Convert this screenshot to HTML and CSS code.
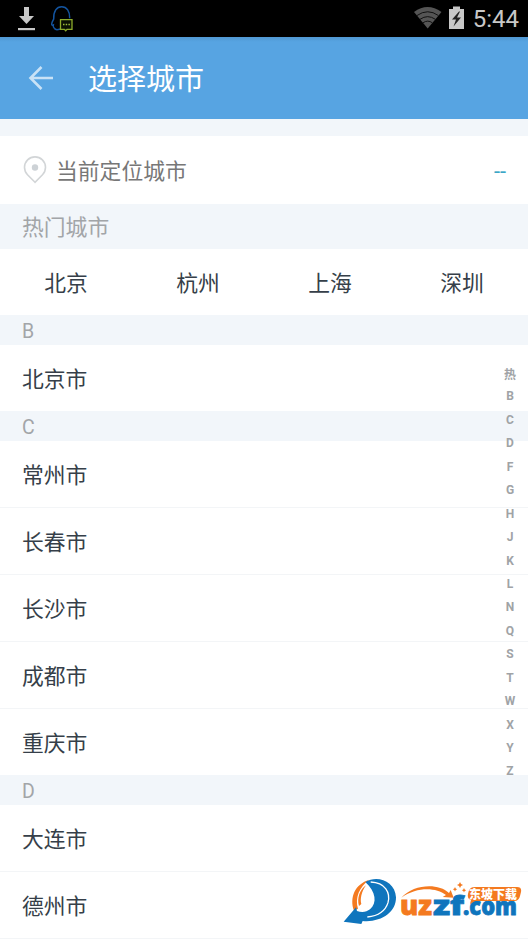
FILE: index.html
```html
<!DOCTYPE html>
<html lang="zh-CN">
<head>
<meta charset="utf-8">
<title>选择城市</title>
<link rel="stylesheet" href="styles.css">
</head>
<body>
<div class="screen">
  <div class="status">
    <svg class="status-left" width="80" height="37" viewBox="0 0 80 37">
      <path d="M24 7h5v9h5l-7.500 8-7.500-8h5z" fill="#c8c8c8"/>
      <path d="M18 28h17v2.200H18z" fill="#c8c8c8"/>
      <path d="M54.500 28.500c-1.200-1-1.500-2-1.200-3.500-1 .5-1.600 0-1.600-1 0-2 1.500-3.500 2-5-.3-8 3-12.300 8-12.300s8.300 4.500 8 11.500M54.500 28.500c1 1.500 3.500 1.200 5.500.5" fill="none" stroke="#13549f" stroke-width="1.500"/>
      <path d="M60.500 19.700h11.500v9.600h-5l-1.300 1.500-1.300-1.500h-3.900z" fill="#0b1003" stroke="#8dab2b" stroke-width="1.300"/>
      <path d="M63 23.800h1.500v1.500H63zm2.700 0h1.500v1.500h-1.500zm2.700 0h1.500v1.500h-1.500z" fill="#9dbb39"/>
    </svg>
    <div class="status-right">
      <svg width="52" height="37" viewBox="0 0 52 37">
        <path d="M0 12Q13.500 1.800 27.500 12L13.700 28.500z" fill="#555"/>
        <path d="M3 15.500q10.700-7.500 21.400 0M6 19.300q7.700-5.300 15.400 0M9 22.800q4.700-3.300 9.400 0" fill="none" stroke="#111" stroke-width="1"/>
        <path d="M35 9h4V6.500h7V9h4v20H35z" fill="#c8c8c8"/>
        <path d="M45 11.500L38 19.500h4l-2.500 7 7.500-9h-4l3-6z" fill="#222"/>
      </svg>
      <span class="clock">5:44</span>
    </div>
  </div>
  <header class="bar">
    <svg class="back" width="26" height="26" viewBox="0 0 26 26"><path d="M25 13H2.500M13.500 2L2.500 13l11 11" fill="none" stroke="#c9e2f6" stroke-width="2.600"/></svg>
    <h1>选择城市</h1>
  </header>
  <div class="location">
    <svg class="pin" width="24" height="28" viewBox="0 0 24 28"><path d="M12 26.300L4.500 18.700A10.500 10.500 0 1 1 19.500 18.700z" fill="none" stroke="#d2d5d7" stroke-width="1.600"/><circle cx="12" cy="11.500" r="3.200" fill="#cdd2d6"/></svg>
    <span class="here">当前定位城市</span>
    <span class="located">--</span>
  </div>
  <div class="hot-title">热门城市</div>
  <div class="hot"><span>北京</span><span>杭州</span><span>上海</span><span>深圳</span></div>
  <div class="letter">B</div>
  <ul><li>北京市</li></ul>
  <div class="letter">C</div>
  <ul><li>常州市</li><li>长春市</li><li>长沙市</li><li>成都市</li><li>重庆市</li></ul>
  <div class="letter">D</div>
  <ul class="clipped"><li>大连市</li><li>德州市</li></ul>
  <nav class="index">
    <span class="first">热</span><span>B</span><span>C</span><span>D</span><span>F</span><span>G</span><span>H</span><span>J</span><span>K</span><span>L</span><span>N</span><span>Q</span><span>S</span><span>T</span><span>W</span><span>X</span><span>Y</span><span>Z</span>
  </nav>
  <svg class="mark" width="188" height="70" viewBox="0 0 188 70">
    <g transform="scale(.33333)">
      <path d="M42 122C28 84 44 42 88 29 58 50 44 84 54 116z" fill="#f47a20"/>
      <path d="M57 108C50 84 60 58 78 46 64 66 60 88 64 102z" fill="#f47a20"/>
      <path d="M76 36C112 14 166 34 168 82 169 128 122 158 68 153L64 162 11 155 48 112 51 123C66 128 80 126 90 118 112 98 108 66 76 36z" fill="#0f75bd"/>
      <path d="M92 36C136 38 152 68 144 98 136 124 112 138 82 141" fill="none" stroke="#fff" stroke-width="4"/>
      <path d="M184 83C220 43 294 38 327 69l5-9 9 23-33-2 10-6C287 52 232 50 184 83z" fill="#f47a20"/>
    </g>
    <g class="mark-name">
      <text x="60" y="45" textLength="32" lengthAdjust="spacingAndGlyphs" fill="#f47a20" stroke="#f47a20">uz</text>
      <text x="93" y="45" textLength="31" lengthAdjust="spacingAndGlyphs" fill="#0f75bd" stroke="#0f75bd">zf</text>
      <text class="mark-com" x="123" y="45" textLength="54" lengthAdjust="spacingAndGlyphs" fill="#0f75bd" stroke="#0f75bd">.com</text>
    </g>
    <path d="M134 17h43q5 0 4 5l-1 4q-1 5-6 5h-39l-5 3 1-4q-4-1-3-6 1-7 6-7z" fill="#f47a20"/>
    <text class="mark-tag" x="129" y="29" textLength="48" lengthAdjust="spacingAndGlyphs">东坡下载</text>
    <path d="M120 12l1 2 2 1-2 1-1 2-1-2-2-1 2-1zM115 17l.7 1.500 1.500.7-1.500.7-.7 1.500-.7-1.500-1.500-.7 1.500-.7zM124 18l.7 1.500 1.500.7-1.500.7-.7 1.500-.7-1.500-1.500-.7 1.500-.7z" fill="#f47a20"/>
  </svg>
</div>
</body>
</html>
```
FILE: styles.css
```css
* { box-sizing: border-box; }
body { margin: 0; font-family: Roboto, "Noto Sans CJK SC", sans-serif; background: #fff; }
.screen { position: relative; width: 528px; height: 940px; overflow: hidden; display: flex; flex-direction: column; background: #f2f6fa; }
.screen > * { flex-shrink: 0; }
.status { height: 37px; background: #000; display: flex; justify-content: space-between; }
.status-right { display: flex; align-items: center; padding-right: 9px; gap: 7px; }
.clock { color: #c8c8c8; font-size: 24px; line-height: 37px; padding-top: 1px; }
.bar { height: 82px; background: linear-gradient(#5098d3, #57a4e2 5px); display: flex; align-items: center; padding-left: 28px; }
h1 { margin: 0 0 0 34px; padding-top: 4px; font-size: 29px; line-height: 40px; font-weight: 400; color: #fff; }
.location { margin-top: 17px; height: 68px; background: #fff; display: flex; align-items: center; padding: 0 22px 0 23px; font-size: 21.8px; color: #777; }
.pin { margin-right: 9px; }
.here { padding-bottom: 2px; }
.located { margin-left: auto; padding-top: 2px; color: #3ba5c6; }
.hot-title { height: 45px; line-height: 48px; padding-left: 22px; font-size: 21.8px; color: #a2a5a8; }
.hot { height: 66px; background: #fff; display: grid; grid-template-columns: repeat(4, 1fr); text-align: center; font-size: 21.8px; line-height: 70px; color: #363f49; }
.letter { height: 30px; line-height: 34px; padding-left: 22px; font-size: 19.5px; color: #a2a5a8; }
ul { margin: 0; padding: 0; list-style: none; background: #fff; font-size: 21.8px; color: #363f49; }
li { height: 67px; line-height: 70px; padding-left: 22px; border-bottom: 1px solid #f3f5f7; }
li:last-child { height: 66px; border-bottom: 0; }
.clipped { height: 135px; }
.clipped li:last-child { height: 67px; border-bottom: 1px solid #f3f5f7; }
.index { position: absolute; left: 498px; top: 362px; width: 24px; display: grid; grid-auto-rows: 23.45px; text-align: center; font-size: 12px; font-weight: 700; line-height: 23px; color: #a0a3a6; }
.first { padding-top: 2px; }
.mark { position: absolute; left: 340px; top: 870px; }
.mark-name { font: 800 27px "Open Sans", sans-serif; stroke-width: .8; }
.mark-com { font-size: 24px; }
.mark-tag { font: 900 12px "Noto Sans CJK SC", sans-serif; fill: #fff; }
```
